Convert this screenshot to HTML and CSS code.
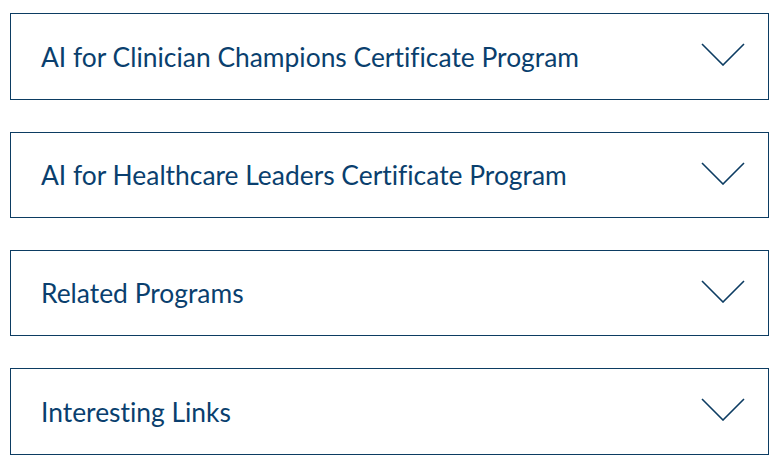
FILE: index.html
```html
<!DOCTYPE html>
<html lang="en">
<head>
<meta charset="utf-8">
<title>Programs</title>
<link rel="stylesheet" href="styles.css">
</head>
<body>
<div class="accordion">
  <div class="item">
    <span class="label">AI for Clinician Champions Certificate Program</span>
    <svg class="chev" viewBox="0 0 44 23" width="44" height="23"><polyline points="1,1 22,22 43,1" /></svg>
  </div>
  <div class="item">
    <span class="label">AI for Healthcare Leaders Certificate Program</span>
    <svg class="chev" viewBox="0 0 44 23" width="44" height="23"><polyline points="1,1 22,22 43,1" /></svg>
  </div>
  <div class="item">
    <span class="label">Related Programs</span>
    <svg class="chev" viewBox="0 0 44 23" width="44" height="23"><polyline points="1,1 22,22 43,1" /></svg>
  </div>
  <div class="item">
    <span class="label">Interesting Links</span>
    <svg class="chev" viewBox="0 0 44 23" width="44" height="23"><polyline points="1,1 22,22 43,1" /></svg>
  </div>
</div>
</body>
</html>
```
FILE: styles.css
```css
html, body {
  margin: 0;
  background: #ffffff;
}
body {
  font-family: "Lato", "Liberation Sans", sans-serif;
}
.accordion {
  display: flex;
  flex-direction: column;
  gap: 32px;
  padding: 13px 13px 0 10px;
}
.item {
  box-sizing: border-box;
  height: 86px;
  border: 1px solid #0c3c62;
  display: flex;
  align-items: center;
  justify-content: space-between;
  padding: 0 23px 0 30px;
}
.item:first-child,
.item:last-child {
  height: 87px;
}
.label {
  font-size: 26.4px;
  color: #0a3f6e;
  font-variant-ligatures: none;
}
.chev {
  display: block;
  margin-top: -4px;
}
.chev polyline {
  fill: none;
  stroke: #0c3c62;
  stroke-width: 1.6;
}
```
